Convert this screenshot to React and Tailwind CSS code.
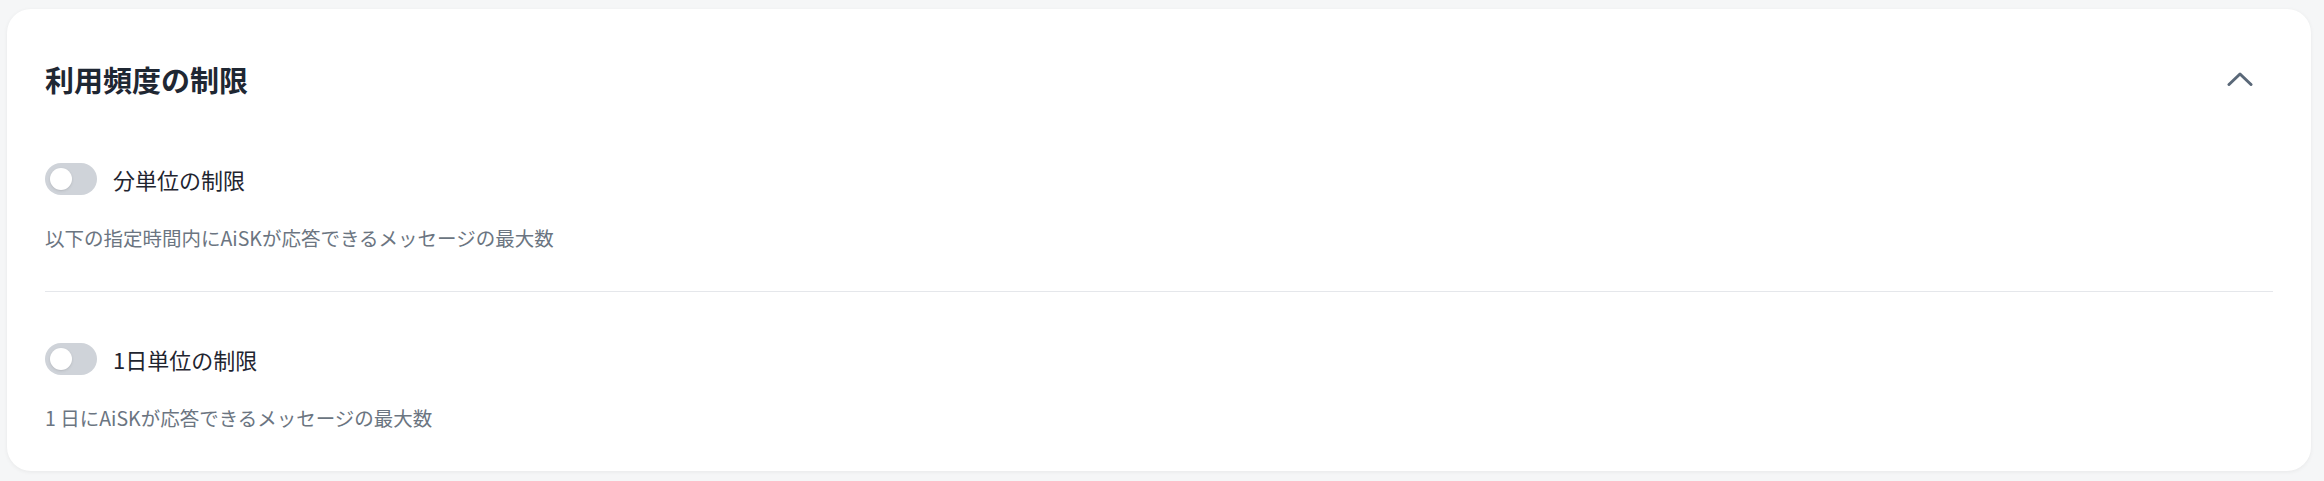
import React from "react";

function Toggle() {
  return (
    <div className="relative h-[32px] w-[52px] shrink-0 rounded-full bg-[#cfd3d9]">
      <div className="absolute left-[5px] top-[5px] h-[22px] w-[22px] rounded-full bg-white shadow-sm" />
    </div>
  );
}

function Section({ label, desc, className }) {
  return (
    <div className={className}>
      <div className="flex h-[32px] items-center">
        <Toggle />
        <span className="ml-[16px] text-[22px] leading-[32px] text-[#1f2530]">{label}</span>
      </div>
      <p className="mt-[29px] text-[19.5px] leading-[28px] text-[#6b7581]">{desc}</p>
    </div>
  );
}

export default function App() {
  return (
    <div
      className="h-[481px] w-full bg-[#f5f6f7] pl-[7px] pr-[13px] pt-[9px]"
      style={{ fontFamily: '"Noto Sans CJK JP", "Noto Sans", sans-serif' }}
    >
      <div className="rounded-[24px] bg-white px-[38px] shadow-[0_1px_4px_rgba(0,0,0,0.06)]">
        <div className="flex h-[90px] items-end">
          <div className="flex h-[40px] w-full items-center justify-between">
            <h2 className="text-[29px] font-bold leading-[40px] text-[#1f2733]">利用頻度の制限</h2>
            <svg width="26" height="14" viewBox="0 0 26 14" className="mr-[20px]" fill="none">
              <polyline
                points="2,12.5 13,2 24,12.5"
                stroke="#5a6878"
                strokeWidth="3"
                strokeLinecap="round"
                strokeLinejoin="round"
              />
            </svg>
          </div>
        </div>
        <Section
          className="border-b border-[#e5e7eb] pt-[64px] pb-[39px]"
          label="分単位の制限"
          desc="以下の指定時間内にAiSKが応答できるメッセージの最大数"
        />
        <Section
          className="pt-[51px] pb-[39px]"
          label="1日単位の制限"
          desc="1 日にAiSKが応答できるメッセージの最大数"
        />
      </div>
    </div>
  );
}
